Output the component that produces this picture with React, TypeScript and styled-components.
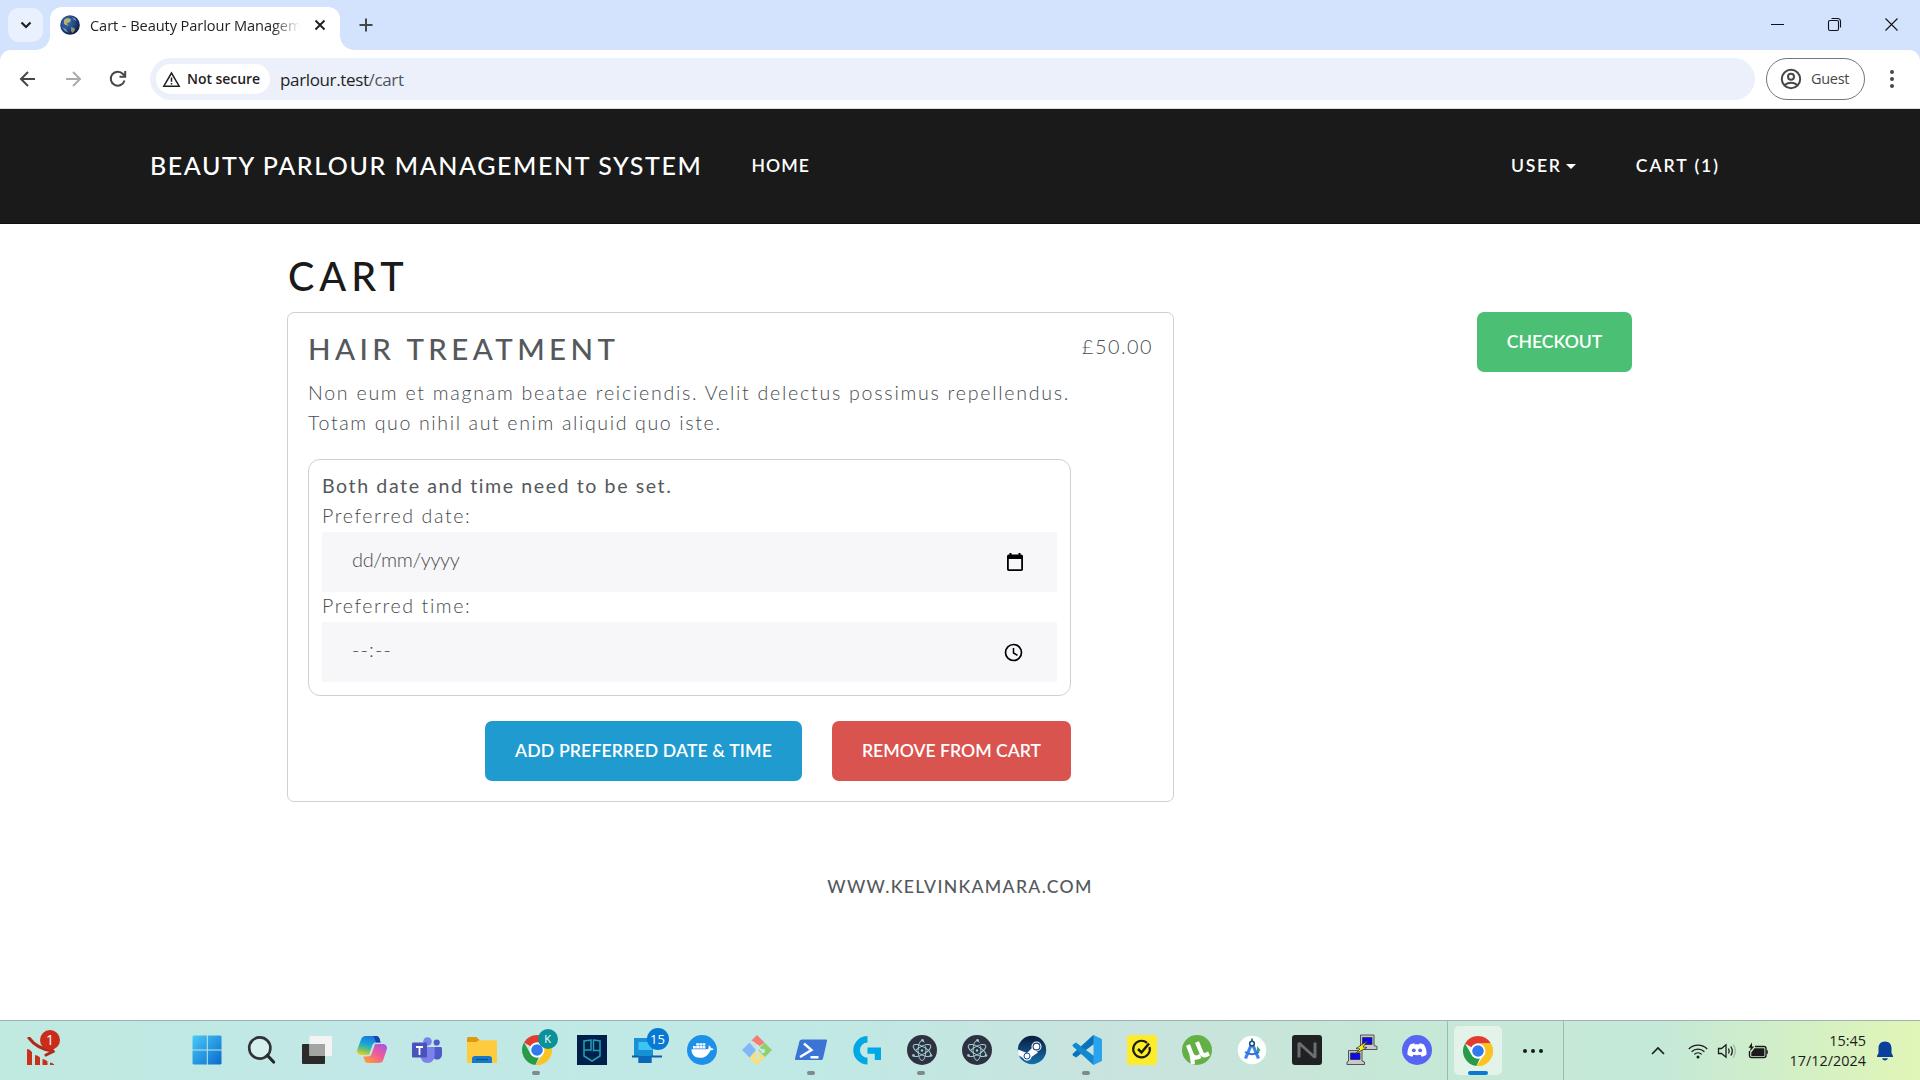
import React from 'react';
import styled, { createGlobalStyle } from 'styled-components';

const Global = createGlobalStyle`
  *, *::before, *::after { box-sizing: border-box; }
  html, body { margin: 0; padding: 0; }
  body { background: #fff; overflow: hidden; }
`;

const ui = '"Open Sans", "Noto Sans", sans-serif';
const page = 'Lato, "Noto Sans", sans-serif';

const Screen = styled.div`
  width: 1920px;
  height: 1080px;
  display: flex;
  flex-direction: column;
  overflow: hidden;
  background: #fff;
`;

/* ---------- browser chrome ---------- */
const TabStrip = styled.div`
  height: 50px;
  background: #d3e2fd;
  display: flex;
  align-items: flex-end;
  flex: none;
`;
const TabSearch = styled.div`
  width: 35px;
  height: 34px;
  margin: 0 7px 8px 8px;
  border-radius: 11px;
  background: #e9f1fe;
  display: grid;
  place-items: center;
`;
const Tab = styled.div`
  position: relative;
  width: 290px;
  height: 43px;
  background: #fff;
  border-radius: 12px 12px 0 0;
  display: flex;
  align-items: center;
  padding: 0 13px 7px 10px;
  &::before, &::after {
    content: '';
    position: absolute;
    bottom: 0;
    width: 14px;
    height: 14px;
  }
  &::before { left: -14px; background: radial-gradient(circle at 0 0, transparent 13.5px, #fff 14px); }
  &::after { right: -14px; background: radial-gradient(circle at 100% 0, transparent 13.5px, #fff 14px); }
`;
const TabTitle = styled.div`
  font: 400 14.6px/22px ${ui};
  letter-spacing: -0.08px;
  color: #1f1f1f;
  width: 214px;
  margin-left: 10px;
  white-space: nowrap;
  mask-image: linear-gradient(90deg, #000 182px, transparent 210px);
`;
const TabClose = styled.div`
  margin-left: auto;
  display: grid;
`;
const NewTab = styled.div`
  width: 24px;
  height: 50px;
  margin-left: 14px;
  display: grid;
  place-items: center;
`;
const WindowButtons = styled.div`
  margin-left: auto;
  height: 50px;
  display: flex;
  svg { margin: 17px 21px 0 21px; }
`;
const ToolbarBack = styled.div`
  background: #d3e2fd;
  flex: none;
`;
const Toolbar = styled.div`
  height: 59px;
  background: #fff;
  border-radius: 11px 11px 0 0;
  border-bottom: 1px solid #dcdcdc;
  display: flex;
  align-items: center;
`;
const NavIcons = styled.div`
  display: flex;
  width: 150px;
  padding-left: 17px;
  gap: 23px;
`;
const AddressBar = styled.div`
  width: 1605px;
  height: 42px;
  border-radius: 21px;
  background: #ebf0fa;
  display: flex;
  align-items: center;
  padding-left: 6px;
`;
const Chip = styled.div`
  width: 114px;
  height: 30px;
  border-radius: 15px;
  background: #fff;
  display: flex;
  align-items: center;
  padding-left: 6px;
  gap: 6px;
`;
const ChipText = styled.span`
  font: 600 14px/20px ${ui};
  letter-spacing: -0.05px;
  color: #1f1f1f;
  white-space: nowrap;
`;
const Url = styled.span`
  font: 400 17px/24px ${ui};
  letter-spacing: -0.36px;
  color: #1f1f1f;
  margin-left: 10px;
  padding-top: 1px;
  em { font-style: normal; color: #50545a; }
`;
const Guest = styled.div`
  width: 99px;
  height: 42px;
  margin-left: 11px;
  border: 1px solid #747775;
  border-radius: 21px;
  display: flex;
  align-items: center;
  padding-left: 13px;
  gap: 9px;
`;
const GuestText = styled.span`
  font: 400 14.5px/20px ${ui};
  letter-spacing: -0.3px;
  color: #474747;
`;
const Menu = styled.div`
  margin-left: 18px;
  display: grid;
`;

/* ---------- site ---------- */
const Header = styled.header`
  height: 115px;
  flex: none;
  background: #1a1a1a;
  border-bottom: 1px solid #120f12;
  display: flex;
  align-items: center;
  padding: 0 200px 0 150px;
  color: #fff;
  font-family: ${page};
`;
const Brand = styled.span`
  font-size: 25px;
  font-weight: 500;
  line-height: 38px;
  padding-bottom: 3px;
  letter-spacing: 1.59px;
  white-space: nowrap;
  width: 601.5px;
`;
const NavLink = styled.span<{ $ls: number }>`
  font-size: 17.6px;
  font-weight: 600;
  line-height: 26px;
  padding-bottom: 1px;
  letter-spacing: ${p => p.$ls}px;
  white-space: nowrap;
`;
const NavRight = styled.div`
  margin-left: auto;
  display: flex;
  align-items: center;
  width: 209px;
`;
const UserMenu = styled.div`
  display: flex;
  align-items: center;
  width: 125px;
  gap: 4.5px;
`;
const Caret = styled.i`
  border: 5px solid transparent;
  border-top-color: #fff;
  border-bottom: 0;
`;
const Main = styled.main`
  width: 1345px;
  margin: 28px 0 0 287px;
  font-family: ${page};
  color: #55595c;
  flex: 1;
`;
const PageTitle = styled.h1`
  margin: 0 0 12px;
  padding-left: 1px;
  font-size: 39.5px;
  font-weight: 500;
  line-height: 48px;
  letter-spacing: 5px;
  color: #1a1a1a;
`;
const Columns = styled.div`
  display: flex;
  justify-content: space-between;
  align-items: flex-start;
`;
const Card = styled.section`
  width: 887px;
  height: 490px;
  border: 1px solid #d0d0d0;
  border-radius: 7px;
  padding: 18px 20px 20px;
  display: flex;
  justify-content: space-between;
`;
const CardBody = styled.div`
  width: 763px;
`;
const ItemTitle = styled.h2`
  margin: 0 0 11px;
  font-size: 29.5px;
  font-weight: 500;
  line-height: 36px;
  letter-spacing: 4.43px;
`;
const Copy = styled.div<{ $ls: number }>`
  font-size: 19.6px;
  font-weight: 300;
  line-height: 30px;
  letter-spacing: ${p => p.$ls}px;
  white-space: nowrap;
  color: #484c4f;
`;
const Price = styled.div`
  font-size: 19.8px;
  font-weight: 300;
  line-height: 30px;
  letter-spacing: 1.5px;
  color: #484c4f;
`;
const Form = styled.div`
  margin-top: 21px;
  height: 237px;
  border: 1px solid #d0d0d0;
  border-radius: 12px;
  padding: 12px 13px 13px;
`;
const Label = styled.div<{ $strong?: boolean }>`
  height: 30px;
  font-size: 19.6px;
  line-height: 27px;
  font-weight: ${p => (p.$strong ? 400 : 300)};
  color: ${p => (p.$strong ? '#55595c' : '#484c4f')};
  letter-spacing: 1.58px;
  white-space: nowrap;
`;
const Field = styled.div`
  height: 60px;
  background: #f7f7f9;
  display: flex;
  justify-content: space-between;
  align-items: center;
  padding: 0 33px 0 30px;
`;
const FieldText = styled.span<{ $ls: number }>`
  font-size: 20px;
  font-weight: 300;
  line-height: 55px;
  padding-bottom: 5px;
  letter-spacing: ${p => p.$ls}px;
  color: #484c4f;
`;
const Actions = styled.div`
  margin-top: 25px;
  display: flex;
  justify-content: flex-end;
  gap: 30px;
`;
const Button = styled.button<{ $w: number; $bg: string; $ls?: number }>`
  width: ${p => p.$w}px;
  height: 60px;
  border: 0;
  border-radius: 7px;
  padding: 0;
  background: ${p => p.$bg};
  color: #fff;
  font: 600 17.6px/60px ${page};
  letter-spacing: ${p => p.$ls ?? 0}px;
  white-space: nowrap;
`;
const Footer = styled.footer`
  height: 146px;
  flex: none;
  text-align: center;
  font: 500 17.6px/26px ${page};
  letter-spacing: 1.32px;
  color: #55595c;
`;

/* ---------- taskbar ---------- */
const Taskbar = styled.div`
  height: 60px;
  flex: none;
  border-top: 1px solid #9fb3b3;
  background: linear-gradient(90deg, #c0e9e0 0, #c1e8e6 340px, #c0e9e5 800px, #c9e3de 1130px, #c6e8d6 1400px, #c5e9d8 1660px, #d2efc6 1790px, #e1f5b6 1920px);
  display: flex;
  align-items: center;
`;
const Widget = styled.div`
  position: relative;
  width: 179px;
  padding-left: 27px;
  display: flex;
`;
const Cell = styled.div`
  position: relative;
  width: 55px;
  height: 59px;
  padding-bottom: 2px;
  display: grid;
  place-items: center;
  svg { overflow: visible; }
`;
const Running = styled.i`
  position: absolute;
  left: 23px;
  bottom: 5px;
  width: 8px;
  height: 4px;
  border-radius: 2px;
  background: #7d8a8c;
`;
const Badge = styled.span<{ $bg: string; $x: number; $y: number; $size: number; $fs: number }>`
  position: absolute;
  left: ${p => p.$x}px;
  top: ${p => p.$y}px;
  width: ${p => p.$size}px;
  height: ${p => p.$size}px;
  border-radius: 99px;
  background: ${p => p.$bg};
  color: #fff;
  text-align: center;
  font: 400 ${p => p.$fs}px/${p => p.$size}px ${ui};
`;
const ActiveZone = styled.div`
  width: 117px;
  height: 59px;
  border-left: 1px solid #9fb9af;
  border-right: 1px solid #9fb9af;
  margin-left: 3px;
  display: flex;
  align-items: center;
  padding-left: 6px;
  gap: 20px;
`;
const ActiveApp = styled.div`
  position: relative;
  width: 48px;
  height: 49px;
  border-radius: 5px;
  background: #e4f3e9;
  display: grid;
  place-items: center;
`;
const ActiveMark = styled.i`
  position: absolute;
  left: 14px;
  bottom: 0;
  width: 20px;
  height: 4px;
  border-radius: 2px;
  background: #0b78d4;
`;
const Tray = styled.div`
  margin-left: auto;
  width: 270px;
  display: grid;
  grid-template-columns: 38px 29px 31px 20px 98px 16px;
  column-gap: 0;
  align-items: center;
  svg:last-child { margin-left: 11px; }
`;
const Clock = styled.div`
  text-align: right;
  font: 400 14.4px/20px ${ui};
  color: #1b1b1b;
`;

const Arrow = ({ dim }: { dim?: boolean }) => (
  <svg width="22" height="22" viewBox="0 0 22 22" fill="none" stroke={dim ? '#a9abae' : '#474747'} strokeWidth="2">
    {dim ? <path d="M4 11h14M11 4l7 7-7 7" /> : <path d="M18 11H4M11 4l-7 7 7 7" />}
  </svg>
);

const Globe = () => (
  <svg width="20" height="20" viewBox="0 0 20 20">
    <defs>
      <radialGradient id="earth" cx=".35" cy=".35" r=".75">
        <stop offset="0" stopColor="#3f74b8" /><stop offset=".6" stopColor="#1d3f7c" /><stop offset="1" stopColor="#0a1428" />
      </radialGradient>
    </defs>
    <circle cx="10" cy="10" r="9.8" fill="url(#earth)" />
    <path d="M4 5l3-2 4 1-1 3-3 1 1 3-4-2z" fill="#b5b46a" />
    <path d="M11 12l3.500 1 .5 2-2.500 3-1.500-2z" fill="#8d9464" />
    <path d="M12 2l3 1.500 1.500 2.500-2.500-1zM2 12l4 2 2 3.500-3-1.500z" fill="#7e98b4" />
  </svg>
);

const Chrome = () => (
  <svg width="30" height="30" viewBox="0 0 48 48">
    <path fill="#e33b2e" d="M24 0a24 24 0 0 1 20.8 12H24a12 12 0 0 0-10.4 6L3.200 12A24 24 0 0 1 24 0z" />
    <path fill="#289a48" d="M3.200 12l10.400 18a12 12 0 0 0 10.400 6 12 12 0 0 0 3-.4L21.500 47.900A24 24 0 0 1 3.200 12z" />
    <path fill="#fcc31e" d="M44.800 12a24 24 0 0 1-23.300 35.900L34.400 30a12 12 0 0 0-2-15l-.4-3z" />
    <path fill="#fcc31e" d="M24 12h20.800L34 30z" />
    <circle cx="24" cy="24" r="12" fill="#fff" />
    <circle cx="24" cy="24" r="9.300" fill="#3079ef" />
  </svg>
);

const Electron = () => (
  <svg width="30" height="30" viewBox="0 0 30 30" fill="none" stroke="#9fd0d6" strokeWidth="1">
    <circle cx="15" cy="15" r="15" fill="#2e3140" stroke="none" />
    <ellipse cx="15" cy="15.500" rx="10" ry="3.900" transform="rotate(-30 15 15.500)" strokeDasharray="24 5" />
    <ellipse cx="15" cy="15.500" rx="10" ry="3.900" transform="rotate(30 15 15.500)" />
    <ellipse cx="15" cy="15.500" rx="10" ry="3.900" transform="rotate(90 15 15.500)" strokeDasharray="26 4" />
    <g fill="#9fd0d6" stroke="none"><circle cx="15" cy="15.500" r="1.200" /><circle cx="15.500" cy="5.200" r="1.300" /><circle cx="6.500" cy="20.500" r="1.300" /><circle cx="24" cy="20.500" r="1.300" /></g>
  </svg>
);

const icons: { el: React.ReactNode; running?: boolean; badge?: React.ReactNode }[] = [
  { el: (
    <svg width="30" height="30" viewBox="0 0 30 30">
      <defs><linearGradient id="win" x1="0" y1="0" x2="30" y2="30" gradientUnits="userSpaceOnUse"><stop stopColor="#4bcbf8" /><stop offset="1" stopColor="#0669cc" /></linearGradient></defs>
      <path fill="url(#win)" d="M1.500.500H14.800V14.400H.500V1.500zM15.800.500H28.500l1 1V14.400H15.800zM.500 15.400H14.800V29.500H1.500l-1-1zM15.800 15.400H29.500V28.500l-1 1H15.800z" />
    </svg>) },
  { el: (
    <svg width="30" height="30" viewBox="0 0 30 30" fill="none">
      <circle cx="12.800" cy="13" r="10.600" stroke="#303438" strokeWidth="2.600" fill="#d6f0ee" />
      <path d="M20.500 20.500L26.600 27" stroke="#26292c" strokeWidth="3.200" strokeLinecap="round" />
    </svg>) },
  { el: (
    <svg width="30" height="30" viewBox="0 0 30 30">
      <rect x="0" y="9" width="23" height="20" rx="1" fill="#2a2a2a" />
      <rect x="7.500" y="1" width="22.500" height="20" rx="1" fill="#f3f3f3" />
      <rect x="7.500" y="9" width="15.500" height="12" fill="#a3a4a4" />
    </svg>) },
  { el: (
    <svg width="30" height="30" viewBox="0 0 30 30">
      <defs>
        <linearGradient id="cpA" x1="10" y1="0" x2="5" y2="20" gradientUnits="userSpaceOnUse"><stop stopColor="#1b74dc" /><stop offset=".45" stopColor="#18a8d8" /><stop offset=".75" stopColor="#74c36a" /><stop offset="1" stopColor="#f4cf26" /></linearGradient>
        <linearGradient id="cpB" x1="26" y1="8" x2="12" y2="28" gradientUnits="userSpaceOnUse"><stop stopColor="#a855e4" /><stop offset=".5" stopColor="#ee5a9a" /><stop offset="1" stopColor="#fb9a3c" /></linearGradient>
      </defs>
      <path fill="url(#cpA)" d="M8.500 1H19c2 0 3 1 3.600 3l1 3.500h-4.500c-2 0-3.200 1-3.800 3L12 20H4.500C1 20-.800 17.500.400 14L4 4.500C4.800 2.200 6.300 1 8.500 1z" />
      <path fill="#1d3fb4" d="M16 1h3c2 0 3 1 3.600 3l1 3.500h-4.500c-1.500-2-1-5-3.100-6.500z" />
      <path fill="url(#cpB)" d="M21.500 28H11c-2 0-3-1-3.600-3l-1-3.500h4.500c2 0 3.200-1 3.800-3L18 9h7.500c3.500 0 5.300 2.500 4.100 6L26 25.500c-.8 1.800-2.300 2.500-4.500 2.500z" />
    </svg>) },
  { el: (
    <svg width="30" height="30" viewBox="0 0 30 30">
      <circle cx="15.500" cy="6.500" r="4.300" fill="#7b83eb" /><circle cx="24.700" cy="7.500" r="3.100" fill="#5059c9" />
      <path fill="#5059c9" d="M19 12h9.500c.8 0 1.500.6 1.500 1.500V19c0 3.500-2 5.500-5 5.500S19 22 19 19z" />
      <path fill="#7b83eb" d="M8.500 12h14.200v8c0 4.500-3 8-7.200 8s-7-3.500-7-8z" />
      <rect y="7.500" width="15" height="15" rx="1.300" fill="#4a52bd" />
      <path d="M4 12h7M7.500 12v8" stroke="#fff" strokeWidth="1.800" />
    </svg>) },
  { el: (
    <svg width="30" height="30" viewBox="0 0 30 30">
      <path fill="#dc9a0c" d="M0 3.500Q0 2 1.500 2h8L12.500 5v5H0z" />
      <path fill="#fecb3e" d="M0 7h9l3-1.800h16.500q1.500 0 1.500 1.500V28H0z" />
      <path fill="#1679c9" d="M5 28v-4q0-3 3-3h14q3 0 3 3v4z" /><path d="M9 24.500h12" stroke="#0c4f90" strokeWidth="1.200" />
    </svg>) },
  { el: <Chrome />, running: true, badge: <Badge $bg="#0b9299" $x={28.5} $y={7.5} $size={20} $fs={11}>K</Badge> },
  { el: (
    <svg width="30" height="30" viewBox="0 0 30 30" fill="none" stroke="#1fa0b8" strokeWidth="1.500">
      <path fill="#00204a" stroke="none" d="M0 0h30v30H0z" />
      <path d="M7 17V6l7-1v10H7M16.500 5l6.500 1v9.500h-6.500zM7 17v4l8 5 8-5v-5.500" />
    </svg>) },
  { el: (
    <svg width="30" height="30" viewBox="0 0 30 30">
      <path fill="#1b8fd8" d="M2 3h19v18H2z" /><path fill="#0d5ea6" d="M0 20.500h30v2H0z" />
      <path fill="#3cc4f5" d="M6.500 7h14v8h-14z" /><path fill="#1692d4" d="M6.500 15h13v13h-13z" /><path fill="#0b68b6" d="M6.500 21h13v7h-13z" />
    </svg>), badge: <Badge $bg="#0778d4" $x={27.5} $y={7} $size={22} $fs={13}>15</Badge> },
  { el: (
    <svg width="30" height="30" viewBox="0 0 30 30">
      <circle cx="15" cy="15" r="15" fill="#1d91e8" />
      <path fill="#fff" d="M4.500 14.300h16.300c1-.5 1.200-2.800.6-3.800 1.600.2 2.500 1.500 2.600 2.800 1 0 2.200.2 2.700.8-.8 1-2 1.300-3.400 1.300C21.500 20 18 22.800 13 22.800c-5.500 0-8.500-3-8.500-8.500z" />
      <path fill="#fff" d="M6 11h2.800v2.500H6zM9.200 11H12v2.500H9.200zM12.400 11h2.800v2.500h-2.800zM15.600 11h2.800v2.500h-2.800zM9.200 8.200H12v2.400H9.200zM12.400 8.200h2.800v2.400h-2.800zM15.600 8.200h2.800v2.400h-2.800z" />
    </svg>) },
  { el: (
    <svg width="30" height="30" viewBox="0 0 30 30">
      <path fill="#f77b73" d="M15 0l7.500 7.500L15 13 9 6z" /><path fill="#8fcf6a" d="M22.500 7.500L30 15l-7 7-7-7z" /><path fill="#ffde6b" d="M15 16l7.500 6.500L15 30l-7.500-7.500z" /><path fill="#81b6f8" d="M7.500 7.500L14 15l-6.500 7.500L0 15z" />
      <path d="M9 6l6.500 5v13M15.500 12l6 5" stroke="#c5e9e5" strokeWidth="2.200" fill="none" /><circle cx="15.300" cy="12" r="2.300" fill="#c5e9e5" /><circle cx="21" cy="16" r="2.300" fill="#c5e9e5" /><circle cx="15.300" cy="22.500" r="2.300" fill="#c5e9e5" />
    </svg>) },
  { el: (
    <svg width="30" height="30" viewBox="0 0 30 30">
      <path fill="#3c74d6" d="M5 4.500h24q1.500 0 1 1.500l-4 17.500q-.4 1.500-2 1.500H-1q-1.500 0-1-1.500L2.500 6Q3 4.500 5 4.500z" />
      <path d="M7 8.500l7.500 6.500L3 22M13.500 22.300h8" stroke="#fff" strokeWidth="2.400" fill="none" />
    </svg>), running: true },
  { el: (
    <svg width="30" height="30" viewBox="0 0 30 30" fill="#00a9e6">
      <path d="M15.500 1v6.500a7.600 7.600 0 0 0 0 15.200v6.800a14.200 14.200 0 0 1 0-28.500zM15.500 12.500H29V25h-6.200v-6.200h-7.300z" />
    </svg>) },
  { el: <Electron />, running: true },
  { el: <Electron /> },
  { el: (
    <svg width="30" height="30" viewBox="0 0 30 30">
      <defs><linearGradient id="steam" x1="0" y1="0" x2="0" y2="1"><stop stopColor="#0b1a3c" /><stop offset="1" stopColor="#1572b0" /></linearGradient></defs>
      <circle cx="15" cy="15" r="14.200" fill="url(#steam)" />
      <path fill="#fff" d="M1 14.500l9 3.500 5-5 6 4.500-6.500 4.500a4.500 4.500 0 0 1-8.500 1L1.200 20z" />
      <circle cx="19.500" cy="11.500" r="5" fill="#fff" /><circle cx="19.500" cy="11.500" r="3.400" fill="#fff" stroke="#17386c" strokeWidth="1.100" /><circle cx="10" cy="21" r="3" fill="none" stroke="#1d4e87" strokeWidth="1" />
    </svg>) },
  { el: (
    <svg width="30" height="30" viewBox="0 0 30 30">
      <path fill="#0a71b8" d="M22 0v9L4 22.500 1 20.500q-1-1 0-2L20.500.700z" /><path fill="#1488cf" d="M22 30v-9L4 7.500 1 9.500q-1 1 0 2L20.500 29.300z" />
      <path fill="#2aa3ee" d="M21.500 0L29 3.400q1 .5 1 1.600v20q0 1.100-1 1.600L21.500 30q-.5-1 0-2z" />
    </svg>), running: true },
  { el: (
    <svg width="30" height="30" viewBox="0 0 30 30">
      <rect width="30" height="30" rx="3" fill="#fdec2b" />
      <path d="M20 7.800a8.300 8.300 0 1 0 2.600 4.200" stroke="#1d1d10" strokeWidth="2.200" fill="none" /><path d="M11 14l3.500 3.500 7.500-9" stroke="#1d1d10" strokeWidth="2.500" fill="none" />
    </svg>) },
  { el: (
    <svg width="30" height="30" viewBox="0 0 30 30">
      <circle cx="15" cy="15" r="15" fill="#65b045" />
      <path d="M6 10l3.500 9q2 5 7 3l2-1M15 7l4.500 11q1.500 3 4.500 2l3-1.500M9.500 19l1.500 10" stroke="#fff" strokeWidth="4.200" fill="none" />
    </svg>) },
  { el: (
    <svg width="30" height="30" viewBox="0 0 30 30">
      <circle cx="15" cy="15" r="14.300" fill="#fdfefe" /><path d="M20 11l3.500 4-3.500 4z" fill="#34a868" />
      <path d="M15 8L8.500 23.500M15 8l6.500 15.500" stroke="#3d83ee" strokeWidth="3.200" fill="none" /><path d="M8 17q7 4.500 14 0" stroke="#2f6fd6" strokeWidth="2" fill="none" />
      <circle cx="15" cy="8.500" r="2.300" fill="#fff" stroke="#1c4d78" strokeWidth="1.600" /><path d="M15 3.500v3" stroke="#1c4d78" strokeWidth="1.500" />
    </svg>) },
  { el: (
    <svg width="30" height="30" viewBox="0 0 30 30">
      <rect width="30" height="30" rx="3" fill="#1f2122" /><path d="M7 22.500V8l16 14.500V7.500" stroke="#6c6e70" strokeWidth="3" fill="none" strokeLinejoin="bevel" />
    </svg>) },
  { el: (
    <svg width="30" height="30" viewBox="0 0 30 30" stroke="#333" strokeWidth=".8">
      <path fill="#c9c9c9" d="M13.500 0h13.500v10.500l3 1v3H14l-.5-3zM1.500 15.500H15V26l2.500 1v2.500H0V27l1.500-1z" />
      <path fill="#0a0af0" d="M15.500 2.500h9.500v7h-9.500zM3.500 18H13v6.500H3.500z" /><path fill="#ffe81a" d="M20.500 6L9 13.500l4 .5-5 5 12-6.500-4-.5z" />
    </svg>) },
  { el: (
    <svg width="30" height="30" viewBox="0 0 30 30">
      <circle cx="15" cy="15" r="15" fill="#5865f2" />
      <path fill="#fff" d="M12.300 8.300c-1.600.2-3 .7-4.200 1.300C6 12.900 5.200 16.200 5.500 19.700c1.700 1.200 3.400 1.700 4.700 2l1.200-1.900c2.400.6 4.800.6 7.200 0l1.200 1.900c1.300-.3 3-.8 4.700-2 .3-3.500-.5-6.800-2.600-10.100-1.200-.6-2.600-1.100-4.200-1.300l-.6 1.200c-1.400-.2-2.800-.2-4.200 0z" />
      <circle cx="11.800" cy="15.300" r="1.900" fill="#5865f2" /><circle cx="18.200" cy="15.300" r="1.900" fill="#5865f2" />
    </svg>) },
];

export default function App() {
  return (
    <Screen>
      <Global />
      <TabStrip>
        <TabSearch><svg width="14" height="14" viewBox="0 0 14 14" fill="none" stroke="#1f1f1f" strokeWidth="2.200"><path d="M2.500 4.500L7 9l4.500-4.500" /></svg></TabSearch>
        <Tab>
          <Globe />
          <TabTitle>Cart - Beauty Parlour Managem</TabTitle>
          <TabClose><svg width="14" height="14" viewBox="0 0 14 14" stroke="#1f1f1f" strokeWidth="1.900"><path d="M2.500 2.500l9 9M11.500 2.500l-9 9" /></svg></TabClose>
        </Tab>
        <NewTab><svg width="14" height="14" viewBox="0 0 14 14" stroke="#474747" strokeWidth="2"><path d="M7 .5v13M.5 7h13" /></svg></NewTab>
        <WindowButtons>
          <svg width="15" height="15" viewBox="0 0 15 15" stroke="#111" strokeWidth="1"><path d="M1 7.500h13" /></svg>
          <svg width="15" height="15" viewBox="0 0 15 15" fill="none" stroke="#111" strokeWidth="1.100"><rect x="1.500" y="3.500" width="10" height="10" rx="1.500" /><path d="M4.500 1.500h6q3 0 3 3v6" /></svg>
          <svg width="15" height="15" viewBox="0 0 15 15" stroke="#111" strokeWidth="1.100"><path d="M1.500 1.500l12 12M13.500 1.500l-12 12" /></svg>
        </WindowButtons>
      </TabStrip>
      <ToolbarBack>
        <Toolbar>
          <NavIcons>
            <Arrow />
            <Arrow dim />
            <svg width="22" height="22" viewBox="0 0 22 22" fill="none" stroke="#474747" strokeWidth="2"><path d="M17.500 12.500A7 7 0 1 1 16 6l2 2.200" /><path d="M18.200 3v5.700h-5.700" /></svg>
          </NavIcons>
          <AddressBar>
            <Chip>
              <svg width="19" height="17" viewBox="0 0 19 17" fill="none" stroke="#1f1f1f" strokeWidth="1.500"><path d="M9.500 2L1.800 15.200h15.400z" /><path d="M9.500 6.500v4.200M9.500 12v1.600" /></svg>
              <ChipText>Not secure</ChipText>
            </Chip>
            <Url>parlour.test<em>/cart</em></Url>
          </AddressBar>
          <Guest>
            <svg width="22" height="22" viewBox="0 0 22 22" fill="none" stroke="#474747" strokeWidth="2"><circle cx="11" cy="11" r="9.200" /><circle cx="11" cy="8.800" r="3" /><path d="M4.500 17q6.500-4.500 13 0" /></svg>
            <GuestText>Guest</GuestText>
          </Guest>
          <Menu><svg width="18" height="20" viewBox="0 0 18 20" fill="#474747"><circle cx="9" cy="3" r="2" /><circle cx="9" cy="10" r="2" /><circle cx="9" cy="17" r="2" /></svg></Menu>
        </Toolbar>
      </ToolbarBack>

      <Header>
        <Brand>BEAUTY PARLOUR MANAGEMENT SYSTEM</Brand>
        <NavLink $ls={1}>HOME</NavLink>
        <NavRight>
          <UserMenu><NavLink $ls={1.7}>USER</NavLink><Caret /></UserMenu>
          <NavLink $ls={1.95}>CART (1)</NavLink>
        </NavRight>
      </Header>

      <Main>
        <PageTitle>CART</PageTitle>
        <Columns>
          <Card>
            <CardBody>
              <ItemTitle>HAIR TREATMENT</ItemTitle>
              <Copy $ls={1.73}>Non eum et magnam beatae reiciendis. Velit delectus possimus repellendus.</Copy>
              <Copy $ls={1.62}>Totam quo nihil aut enim aliquid quo iste.</Copy>
              <Form>
                <Label $strong>Both date and time need to be set.</Label>
                <Label>Preferred date:</Label>
                <Field>
                  <FieldText $ls={-0.38}>dd/mm/yyyy</FieldText>
                  <svg width="18" height="20" viewBox="0 0 18 20"><path fill="#000" d="M3.500 1h2v1.500h7V1h2v1.500h.8q1.700 0 1.700 1.700v13.100q0 1.700-1.700 1.700H2.700Q1 19 1 17.300V4.200q0-1.700 1.700-1.700h.8zM2.800 7v10.300h12.400V7z" /></svg>
                </Field>
                <Label>Preferred time:</Label>
                <Field>
                  <FieldText $ls={1.15}>--:--</FieldText>
                  <svg width="20" height="20" viewBox="0 0 20 20" fill="none" stroke="#000"><circle cx="9.500" cy="10.500" r="8" strokeWidth="1.700" /><path d="M9.500 6v5l4 2.300" strokeWidth="1.500" /></svg>
                </Field>
              </Form>
              <Actions>
                <Button $w={317} $bg="#1f9bcf" $ls={0.15}>ADD PREFERRED DATE &amp; TIME</Button>
                <Button $w={239} $bg="#d9534f">REMOVE FROM CART</Button>
              </Actions>
            </CardBody>
            <Price>£50.00</Price>
          </Card>
          <Button $w={155} $bg="#4bbf73">CHECKOUT</Button>
        </Columns>
      </Main>
      <Footer>WWW.KELVINKAMARA.COM</Footer>

      <Taskbar>
        <Widget>
          <svg width="30" height="28" viewBox="0 0 30 28"><path fill="#c8321c" d="M0 12q3 0 5 3v13H0zM8 18q3 0 5 2.500V28H8zM15.500 22q3 0 5 2.500V28h-5zM23 25.500q3 0 4.500 2.500H23z" /><path d="M2 1q8 11 24 13M19 18l7-3.500-3-4" stroke="#b02a1a" strokeWidth="3" fill="none" strokeLinecap="round" /></svg>
          <Badge $bg="#cb2c1a" $x={40} $y={-7} $size={20} $fs={14}>1</Badge>
        </Widget>
        {icons.map((i, n) => <Cell key={n}>{i.el}{i.badge}{i.running && <Running />}</Cell>)}
        <ActiveZone>
          <ActiveApp><Chrome /><ActiveMark /></ActiveApp>
          <svg width="22" height="6" viewBox="0 0 22 6" fill="#1b1b1b"><circle cx="3" cy="3" r="2" /><circle cx="11" cy="3" r="2" /><circle cx="19" cy="3" r="2" /></svg>
        </ActiveZone>
        <Tray>
          <svg width="16" height="16" viewBox="0 0 16 16" fill="none" stroke="#1b1b1b" strokeWidth="1.600"><path d="M2 11l6-6 6 6" /></svg>
          <svg width="20" height="16" viewBox="0 0 20 16" fill="none" stroke="#1b1b1b" strokeWidth="1.300">
            <path d="M.8 6a13 13 0 0 1 18.400 0M3.600 8.700a9.200 9.200 0 0 1 12.800 0M6.300 11.400a5.400 5.400 0 0 1 7.400 0" /><circle cx="10" cy="14" r="1.500" fill="#1b1b1b" stroke="none" />
          </svg>
          <svg width="21" height="16" viewBox="0 0 21 16" fill="none" stroke="#1b1b1b" strokeWidth="1.300">
            <path d="M1.500 5.500h3L9 1.800v12.400l-4.500-3.700h-3zM11.500 5.500q1.500 2.500 0 5M13.800 3.500q3 4.500 0 9" /><path d="M16.300 1.500q4 6.500 0 13" stroke="#9fb8aa" />
          </svg>
          <svg width="20" height="18" viewBox="0 0 20 18">
            <path d="M7 4.500h9q2 0 2 2v7q0 2-2 2H3.500q-2 0-2-2V9" fill="none" stroke="#1b1b1b" strokeWidth="1.400" /><path fill="#1b1b1b" d="M6.500 6.300H16q.4 0 .4.600v6.500q0 .5-.4.500H3.800q-.5 0-.5-.5v-3zM18.500 8.200h1.300v3.600h-1.300zM4 .5L.5 5.800h2.300L1.800 9.500l4.500-5H4z" />
          </svg>
          <Clock>15:45<br />17/12/2024</Clock>
          <svg width="16" height="20" viewBox="0 0 16 20" fill="#0b3f9c"><path d="M8 .5c4 0 6.500 2.800 6.500 6.500v5l1.500 3v1H0v-1l1.500-3V7C1.500 3.300 4 .5 8 .5zM5 17.200h6q-.8 2.300-3 2.300t-3-2.300z" /></svg>
        </Tray>
      </Taskbar>
    </Screen>
  );
}
